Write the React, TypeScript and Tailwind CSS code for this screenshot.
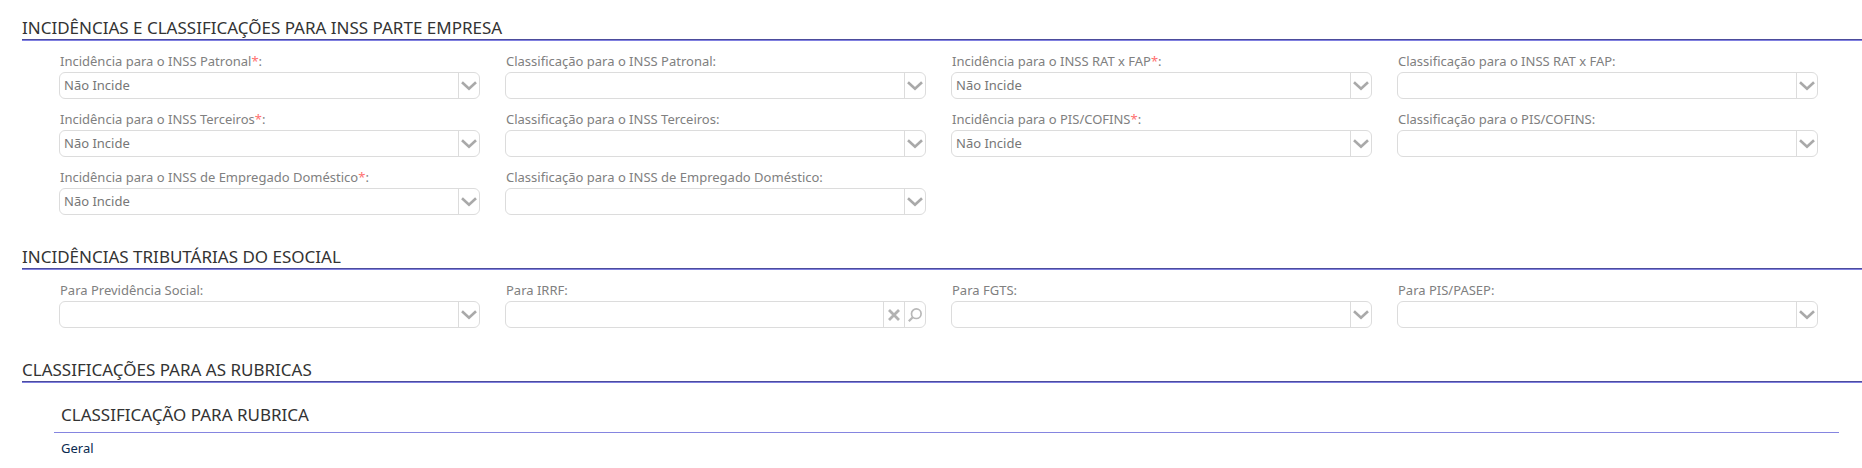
import React, { useId, useState } from "react";

type Kind = "select" | "lookup";
interface FieldDef {
  label: string;
  required?: boolean;
  value?: string;
  kind?: Kind;
}

const EMPRESA: FieldDef[] = [
  { label: "Incidência para o INSS Patronal", required: true, value: "Não Incide" },
  { label: "Classificação para o INSS Patronal" },
  { label: "Incidência para o INSS RAT x FAP", required: true, value: "Não Incide" },
  { label: "Classificação para o INSS RAT x FAP" },
  { label: "Incidência para o INSS Terceiros", required: true, value: "Não Incide" },
  { label: "Classificação para o INSS Terceiros" },
  { label: "Incidência para o PIS/COFINS", required: true, value: "Não Incide" },
  { label: "Classificação para o PIS/COFINS" },
  { label: "Incidência para o INSS de Empregado Doméstico", required: true, value: "Não Incide" },
  { label: "Classificação para o INSS de Empregado Doméstico" },
];

const ESOCIAL: FieldDef[] = [
  { label: "Para Previdência Social" },
  { label: "Para IRRF", kind: "lookup" },
  { label: "Para FGTS" },
  { label: "Para PIS/PASEP" },
];

function SectionTitle({ children }: { children: React.ReactNode }) {
  return (
    <div className="ml-[22px] border-b border-[#8080e0]">
      <h2 className="border-b border-[#4c4c9c] text-[17px] leading-[22px] text-[#333333]">{children}</h2>
    </div>
  );
}

function SelectBox({ id, value }: { id: string; value?: string }) {
  return (
    <div className="relative flex h-[27px] rounded-[6px] border border-[#dcdcdc] bg-white">
      <select
        id={id}
        defaultValue={value ?? ""}
        className="min-w-0 flex-1 appearance-none rounded-[6px] bg-transparent pr-6 pl-1 text-[13px] text-[#777777] outline-none"
      >
        <option value=""></option>
        <option value="Não Incide">Não Incide</option>
      </select>
      <span className="pointer-events-none absolute inset-y-0 right-0 flex w-[21px] items-center justify-center border-l border-[#dcdcdc]">
        <svg width="16" height="10" viewBox="0 0 16 10" fill="none" stroke="#a9a9a9" strokeWidth="2.6" aria-hidden="true">
          <path d="M1 1.2 L8 7.8 L15 1.2" />
        </svg>
      </span>
    </div>
  );
}

function LookupBox({ id }: { id: string }) {
  const [text, setText] = useState("");
  return (
    <div className="flex h-[27px] rounded-[6px] border border-[#dcdcdc] bg-white">
      <input
        id={id}
        type="text"
        value={text}
        onChange={(e) => setText(e.target.value)}
        className="min-w-0 flex-1 bg-transparent px-1 text-[13px] text-[#777777] outline-none"
      />
      <button
        type="button"
        aria-label="Limpar"
        onClick={() => setText("")}
        className="flex w-[21px] items-center justify-center border-l border-[#dcdcdc]"
      >
        <svg width="12" height="12" viewBox="0 0 12 12" fill="none" stroke="#b2b2b2" strokeWidth="2.8" aria-hidden="true">
          <path d="M1 1 L11 11 M11 1 L1 11" />
        </svg>
      </button>
      <button
        type="button"
        aria-label="Pesquisar"
        className="flex w-[21px] items-center justify-center border-l border-[#dcdcdc]"
      >
        <svg width="14" height="14" viewBox="0 0 14 14" fill="none" stroke="#b8b8b8" aria-hidden="true">
          <circle cx="8.3" cy="5.7" r="4.8" strokeWidth="1.7" />
          <path d="M4.8 9.2 L0.8 13.2" strokeWidth="2.2" />
        </svg>
      </button>
    </div>
  );
}

function Field({ field }: { field: FieldDef }) {
  const id = useId();
  return (
    <div className="min-w-0">
      <label htmlFor={id} className="block h-[19px] pl-px text-[13px] leading-[16px] text-[#808080]">
        {field.label}
        {field.required && <span className="text-[#ff7070]">*</span>}:
      </label>
      {field.kind === "lookup" ? <LookupBox id={id} /> : <SelectBox id={id} value={field.value} />}
    </div>
  );
}

function FieldGrid({ fields }: { fields: FieldDef[] }) {
  return (
    <div className="grid grid-cols-4 gap-x-[25px] gap-y-3 pt-3 pr-[44px] pl-[59px]">
      {fields.map((f) => (
        <Field key={f.label} field={f} />
      ))}
    </div>
  );
}

export default function App() {
  return (
    <main className="flex flex-col gap-[31px] bg-white pt-[17px] pb-2 font-['Noto_Sans',sans-serif]">
      <section>
        <SectionTitle>INCIDÊNCIAS E CLASSIFICAÇÕES PARA INSS PARTE EMPRESA</SectionTitle>
        <FieldGrid fields={EMPRESA} />
      </section>
      <section>
        <SectionTitle>INCIDÊNCIAS TRIBUTÁRIAS DO ESOCIAL</SectionTitle>
        <FieldGrid fields={ESOCIAL} />
      </section>
      <section>
        <SectionTitle>CLASSIFICAÇÕES PARA AS RUBRICAS</SectionTitle>
        <div className="pt-[15px] pr-[23px] pl-[54px]">
          <table className="w-full border-collapse text-left">
            <thead>
              <tr className="border-b border-[#8585e0]">
                <th scope="col" className="h-[34px] pl-[7px] text-[17px] leading-[22px] font-normal text-[#333333]">
                  CLASSIFICAÇÃO PARA RUBRICA
                </th>
              </tr>
            </thead>
            <tbody>
              <tr>
                <td className="h-8 pl-[7px] text-[13px] leading-[16px] text-[#0a2a50]">Geral</td>
              </tr>
            </tbody>
          </table>
        </div>
      </section>
    </main>
  );
}
